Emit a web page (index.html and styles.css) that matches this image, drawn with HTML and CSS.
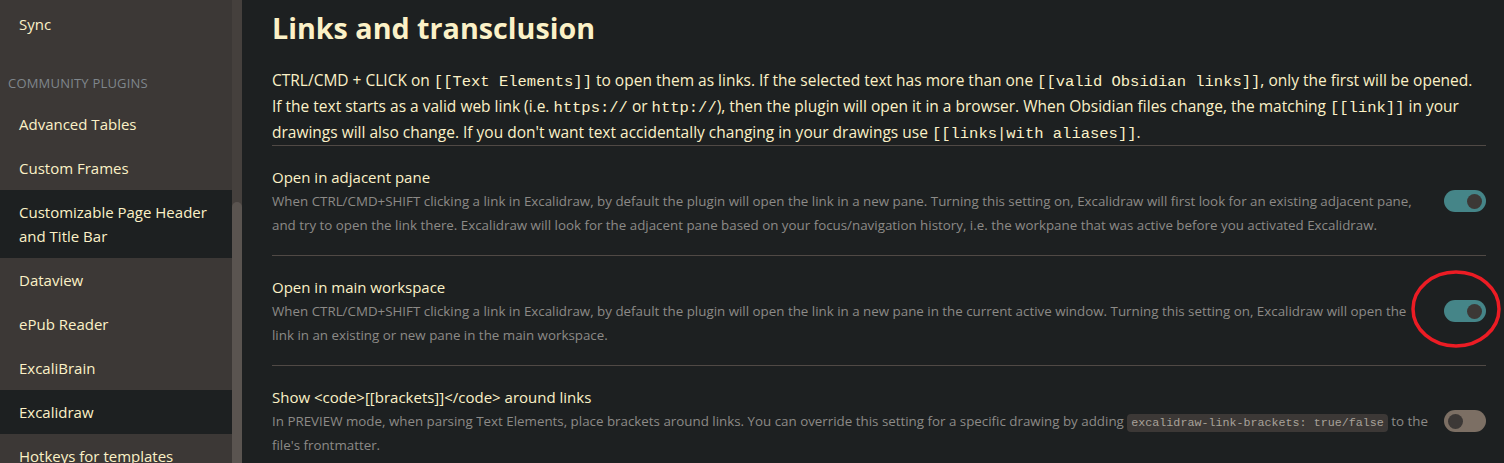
FILE: index.html
```html
<!DOCTYPE html>
<html lang="en">
<head>
<meta charset="utf-8">
<title>Excalidraw settings</title>
<link rel="stylesheet" href="styles.css">
</head>
<body>
<div class="app">
  <nav class="sidebar">
    <div class="nav-list">
      <div class="nav-item">Sync</div>
      <div class="nav-heading">Community plugins</div>
      <div class="nav-item">Advanced Tables</div>
      <div class="nav-item">Custom Frames</div>
      <div class="nav-item active">Customizable Page Header<br>and Title Bar</div>
      <div class="nav-item">Dataview</div>
      <div class="nav-item">ePub Reader</div>
      <div class="nav-item">ExcaliBrain</div>
      <div class="nav-item active">Excalidraw</div>
      <div class="nav-item">Hotkeys for templates</div>
    </div>
    <div class="scroll-track"><div class="scroll-thumb"></div></div>
  </nav>
  <main class="content">
    <h1 class="title">Links and transclusion</h1>
    <p class="intro">CTRL/CMD + CLICK on <code>[[Text Elements]]</code> to open them as links. If the selected text has more than one <code>[[valid Obsidian links]]</code>, only the first will be opened.<br>If the text starts as a valid web link (i.e. <code>https://</code> or <code>http://</code>), then the plugin will open it in a browser. When Obsidian files change, the matching <code>[[link]]</code> in your<br>drawings will also change. If you don't want text accidentally changing in your drawings use <code>[[links|with aliases]]</code>.</p>

    <div class="setting">
      <div class="setting-info">
        <div class="setting-name">Open in adjacent pane</div>
        <div class="setting-desc">When CTRL/CMD+SHIFT clicking a link in Excalidraw, by default the plugin will open the link in a new pane. Turning this setting on, Excalidraw will first look for an existing adjacent pane,<br>and try to open the link there. Excalidraw will look for the adjacent pane based on your focus/navigation history, i.e. the workpane that was active before you activated Excalidraw.</div>
      </div>
      <div class="toggle on"><span class="knob"></span></div>
    </div>

    <div class="setting">
      <div class="setting-info">
        <div class="setting-name">Open in main workspace</div>
        <div class="setting-desc">When CTRL/CMD+SHIFT clicking a link in Excalidraw, by default the plugin will open the link in a new pane in the current active window. Turning this setting on, Excalidraw will open the<br>link in an existing or new pane in the main workspace.</div>
      </div>
      <div class="toggle on"><span class="knob"></span></div>
    </div>

    <div class="setting">
      <div class="setting-info">
        <div class="setting-name">Show &lt;code&gt;[[brackets]]&lt;/code&gt; around links</div>
        <div class="setting-desc">In PREVIEW mode, when parsing Text Elements, place brackets around links. You can override this setting for a specific drawing by adding <code class="chip">excalidraw-link-brackets: true/false</code> to the<br>file's frontmatter.</div>
      </div>
      <div class="toggle"><span class="knob"></span></div>
    </div>

    <svg class="annotation" width="96" height="84" viewBox="0 0 96 84" aria-hidden="true">
      <ellipse cx="48" cy="42" rx="43" ry="37" fill="none" stroke="#ec1c24" stroke-width="3.5"/>
    </svg>
  </main>
</div>
</body>
</html>
```
FILE: styles.css
```css
* { box-sizing: border-box; }
html, body { margin: 0; padding: 0; }
body {
  width: 1504px;
  height: 463px;
  overflow: hidden;
  background: #1d2021;
  font-family: "Open Sans", "Noto Sans", sans-serif;
  color: #fbf1c7;
}
.app {
  display: flex;
  height: 463px;
  overflow: hidden;
}
.sidebar {
  display: flex;
  width: 242px;
  flex: none;
  background: #3c3836;
}
.nav-list {
  width: 232px;
  padding-top: 2px;
}
.nav-item {
  padding: 10px 8px 10px 19px;
  font-size: 15px;
  line-height: 24px;
  color: #fbf1c7;
}
.nav-item.active {
  background: #1d2021;
}
.nav-heading {
  margin: 28px 0 10px 8px;
  font-size: 13px;
  line-height: 18px;
  text-transform: uppercase;
  color: #7f868c;
  letter-spacing: 0.2px;
}
.scroll-track {
  width: 10px;
  background: #45403d;
  padding-top: 202px;
}
.scroll-thumb {
  height: 300px;
  background: #5a5450;
  border-radius: 6px 6px 0 0;
}
.content {
  position: relative;
  flex: 1;
  overflow: hidden;
  padding: 0 18px 0 30px;
}
.title {
  margin: 8px 0 0;
  font-size: 28.7px;
  line-height: 40px;
  font-weight: 700;
  color: #fbf1c7;
}
.intro {
  margin: 19px 0 0;
  padding-bottom: 0;
  font-size: 15.5px;
  line-height: 26px;
  color: #fbf1c7;
  border-bottom: 1px solid #504945;
  white-space: nowrap;
}
code {
  font-family: "Liberation Mono", "DejaVu Sans Mono", monospace;
  font-size: 15.5px;
  line-height: 1;
}
.setting {
  display: flex;
  align-items: center;
  padding: 19px 0 18px;
  border-bottom: 1px solid #504945;
}
.setting:last-of-type { border-bottom: none; }
.setting-info {
  flex: 1;
  white-space: nowrap;
}
.setting-name {
  font-size: 15px;
  line-height: 24px;
  color: #fbf1c7;
}
.setting-desc {
  font-size: 13.35px;
  line-height: 24px;
  color: #8c8a87;
}
.chip {
  font-size: 11.7px;
  color: #a8a29a;
  background: #3c3836;
  padding: 2px 4px;
  border-radius: 4px;
}
.toggle {
  flex: none;
  width: 42px;
  height: 22px;
  border-radius: 11px;
  background: #7c6f64;
  padding: 3px 4px;
  display: flex;
  justify-content: flex-start;
  align-items: center;
}
.toggle.on {
  background: #458588;
  justify-content: flex-end;
}
.knob {
  width: 15px;
  height: 15px;
  border-radius: 50%;
  background: #3c3836;
}
.annotation {
  position: absolute;
  left: 1166px;
  top: 267px;
}
```
